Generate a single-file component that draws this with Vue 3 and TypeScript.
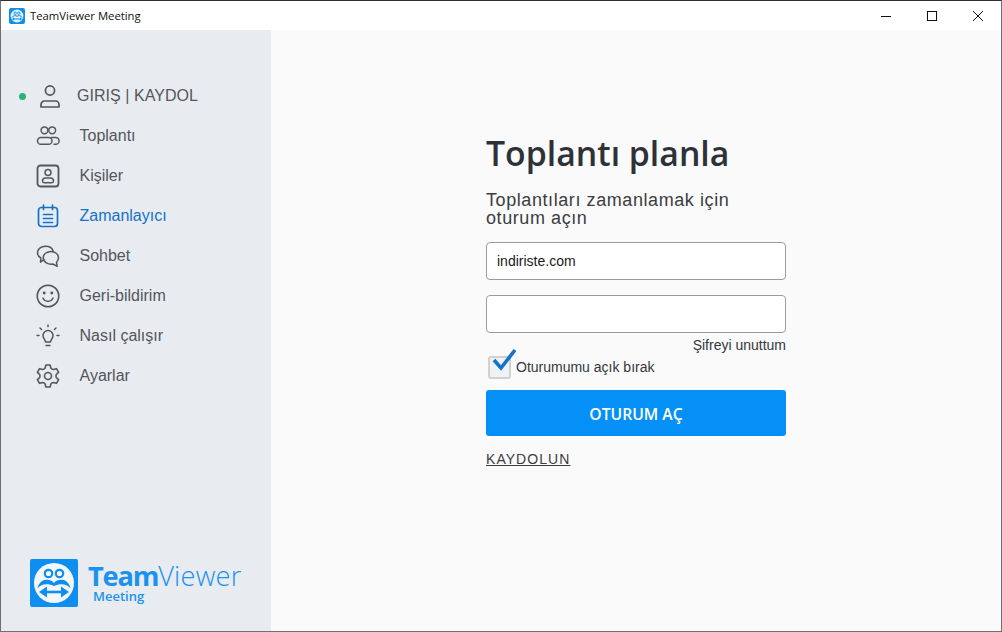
<script setup lang="ts">
interface Item { id: string; label: string; active?: boolean }
const items: Item[] = [
  { id: 'meet', label: 'Toplantı' },
  { id: 'contact', label: 'Kişiler' },
  { id: 'cal', label: 'Zamanlayıcı', active: true },
  { id: 'chat', label: 'Sohbet' },
  { id: 'smile', label: 'Geri-bildirim' },
  { id: 'bulb', label: 'Nasıl çalışır' },
  { id: 'gear', label: 'Ayarlar' },
]

function gearPath(): string {
  const pt = (r: number, deg: number): string => {
    const a = (deg * Math.PI) / 180
    return `${(12 + r * Math.sin(a)).toFixed(2)} ${(12 - r * Math.cos(a)).toFixed(2)}`
  }
  let d = ''
  for (let i = 0; i < 6; i++) {
    const c = i * 60
    d += `${i === 0 ? 'M' : 'L'}${pt(8.4, c - 20)} L${pt(11.2, c - 11)} L${pt(11.2, c + 11)} L${pt(8.4, c + 20)} `
    d += `Q${pt(7.6, c + 30)} ${pt(8.4, c + 40)} `
  }
  return d + 'Z'
}
const gear = gearPath()
</script>

<template>
  <div class="window">
    <header class="titlebar">
      <div class="app">
        <svg class="appicon" viewBox="0 0 16 16">
          <rect width="16" height="16" rx="2" fill="#0e8ee9" />
          <circle cx="8" cy="8" r="6.400" fill="#dff0fb" />
          <circle cx="6.200" cy="5.200" r="1.200" fill="none" stroke="#0e8ee9" stroke-width=".9" />
          <circle cx="9.800" cy="5.200" r="1.200" fill="none" stroke="#0e8ee9" stroke-width=".9" />
          <path d="M3 9.500C4 7.500 6.500 7 8 8.300 9.500 7 12 7.500 13 9.500" stroke="#0e8ee9" fill="none" />
          <path d="M4 11h8" stroke="#0e8ee9" />
          <path d="M3 11l2-1.500v3zM13 11l-2-1.500v3z" fill="#0e8ee9" />
        </svg>
        <span class="apptitle">TeamViewer Meeting</span>
      </div>
      <div class="winbtns">
        <span class="wb"><svg width="12" height="12" viewBox="0 0 12 12"><path d="M1 6.500h10" stroke="#111" /></svg></span>
        <span class="wb"><svg width="12" height="12" viewBox="0 0 12 12"><rect x="1.500" y="1.500" width="9" height="9" fill="none" stroke="#111" /></svg></span>
        <span class="wb"><svg width="12" height="12" viewBox="0 0 12 12"><path d="M1 1l10 10M11 1L1 11" stroke="#111" /></svg></span>
      </div>
    </header>

    <div class="body">
      <aside class="sidebar">
        <nav class="menu">
          <div class="login">
            <span class="dot"></span>
            <svg class="ico" viewBox="0 0 24 24" fill="none" stroke="#54565a" stroke-width="1.700">
              <circle cx="12" cy="6.500" r="4.600" />
              <path d="M3 23v-2.500A3.500 3.500 0 0 1 6.500 17h11a3.500 3.500 0 0 1 3.500 3.500V23z" stroke-linejoin="round" />
            </svg>
            <span class="login-label">GIRIŞ | KAYDOL</span>
          </div>
          <a v-for="it in items" :key="it.id" class="item" :class="{ active: it.active }">
            <svg class="ico" viewBox="0 0 24 24" fill="none" stroke="currentColor" stroke-width="1.500" stroke-linecap="round" stroke-linejoin="round">
              <template v-if="it.id === 'meet'">
                <circle cx="8.500" cy="6.300" r="3.400" />
                <circle cx="16.200" cy="6.300" r="3.400" />
                <rect x="1.500" y="13.500" width="14.500" height="6.800" rx="3.400" />
                <path d="M15.500 13.500h4.200a3.400 3.400 0 0 1 0 6.800H18" />
              </template>
              <template v-else-if="it.id === 'contact'">
                <rect x="1.500" y="1.500" width="21" height="21" rx="3" stroke-width="1.800" />
                <circle cx="12" cy="8.500" r="3" />
                <path d="M6.500 17c0-2 1-3 3-3h5c2 0 3 1 3 3 0 1-.7 1.700-1.700 1.700H8.200c-1 0-1.700-.7-1.700-1.700z" />
              </template>
              <template v-else-if="it.id === 'cal'">
                <rect x="2.500" y="3.500" width="19" height="19" rx="3" stroke-width="1.700" />
                <path d="M7.500 1v4.500M16.500 1v4.500M7.500 10.500h9M7.500 14.500h9M7.500 18.500h9" stroke-width="1.700" />
              </template>
              <template v-else-if="it.id === 'chat'">
                <path d="M8 15.500l-3.500 2.700.3-4.200C2.800 12.700 1.500 10.800 1.500 8.700 1.500 5 5 2.200 9.500 2.200c3.800 0 6.800 1.800 7.700 4.800" />
                <path d="M15 7.500c4 0 7.500 2.500 7.500 6.300 0 1.800-.8 3.300-2 4.500l.7 4-4.300-2.300c-4.500.8-9.700-1.800-9.700-6.200 0-3.800 3.800-6.300 7.800-6.300z" />
              </template>
              <template v-else-if="it.id === 'smile'">
                <circle cx="12" cy="12" r="10.800" />
                <path d="M7 14c1 2.300 3 3.300 5 3.300s4-1 5-3.300" />
                <circle cx="8.200" cy="9" r=".7" fill="currentColor" />
                <circle cx="15.800" cy="9" r=".7" fill="currentColor" />
              </template>
              <template v-else-if="it.id === 'bulb'">
                <path d="M9.500 18c0-2.500-2.500-3.500-2.500-6.500a5 5 0 0 1 10 0c0 3-2.500 4-2.500 6.500z" />
                <path d="M10 21.500h4M1 11.500h2M21 11.500h2M4 4l1.500 1.500M20 4l-1.500 1.500M12 1v1.500" />
              </template>
              <template v-else>
                <circle cx="12" cy="12" r="3.500" stroke-width="1.600" />
                <path :d="gear" stroke-width="1.600" />
              </template>
            </svg>
            <span class="label">{{ it.label }}</span>
          </a>
        </nav>

        <div class="brand">
          <svg class="logo" viewBox="0 0 48 48">
            <rect width="48" height="48" rx="2" fill="#0e8ef0" />
            <circle cx="24" cy="24" r="20" fill="#f2f7fc" />
            <circle cx="18.500" cy="14.500" r="3.700" fill="none" stroke="#0e8ef0" stroke-width="2.200" />
            <circle cx="29.500" cy="14.500" r="3.700" fill="none" stroke="#0e8ef0" stroke-width="2.200" />
            <path d="M24 24c-2-3-5-3.500-8-3.300-4.500.3-7.500 4-8.500 8.800 2.500-3 5.500-4.300 8.500-4.300 3 0 6 .6 8 2 2-1.400 5-2 8-2s6 1.300 8.500 4.300c-1-4.800-4-8.500-8.500-8.800-3-.2-6 .3-8 3.300z" fill="#0e8ef0" />
            <path d="M12 33h24" stroke="#0e8ef0" stroke-width="2.600" />
            <path d="M9 33l8-5.500v11zM39 33l-8-5.500v11z" fill="#0e8ef0" />
          </svg>
          <div class="brandtext">
            <div class="tv"><b>Team</b>Viewer</div>
            <div class="mt">Meeting</div>
          </div>
        </div>
      </aside>

      <main class="main">
        <form class="form" @submit.prevent>
          <h1>Toplantı planla</h1>
          <p class="sub">Toplantıları zamanlamak için<br />oturum açın</p>
          <div class="input">indiriste.com</div>
          <div class="input second"></div>
          <div class="forgot">Şifreyi unuttum</div>
          <div class="keep">
            <span class="box">
              <svg class="check" viewBox="0 0 30 28"><path d="M4 13l7 8L25 3" fill="none" stroke="#1473c8" stroke-width="3.600" /></svg>
            </span>
            <span>Oturumumu açık bırak</span>
          </div>
          <button class="submit" type="submit">OTURUM AÇ</button>
          <a class="signup">KAYDOLUN</a>
        </form>
      </main>
    </div>
  </div>
</template>

<style>
html, body { margin: 0; background: #fff; }
</style>

<style scoped>
.window {
  box-sizing: border-box;
  width: 1002px;
  height: 632px;
  border: 1px solid #6e7073;
  border-top-color: #2f2f2f;
  display: flex;
  flex-direction: column;
  overflow: hidden;
  font-family: "Liberation Sans", Arial, sans-serif;
}
.titlebar {
  height: 29px;
  flex: none;
  background: #fff;
  display: flex;
  align-items: center;
  justify-content: space-between;
}
.app { display: flex; align-items: center; padding-left: 8px; }
.appicon { width: 16px; height: 16px; }
.apptitle { margin-left: 5px; font: 11.3px "Open Sans", sans-serif; color: #111; }
.winbtns { display: flex; }
.wb { width: 46px; height: 29px; display: flex; align-items: center; justify-content: center; }
.body { flex: 1; display: flex; min-height: 0; }
.sidebar {
  width: 270px;
  flex: none;
  background: #e8ecf1;
  display: flex;
  flex-direction: column;
  justify-content: space-between;
}
.menu { padding-top: 46px; display: flex; flex-direction: column; }
.login, .item { height: 40px; display: flex; align-items: center; }
.login { color: #54565a; font-size: 16px; }
.dot { width: 7px; height: 7px; border-radius: 50%; background: #27b774; margin-left: 18px; }
.login .ico { margin-left: 12px; }
.login-label { margin-left: 15px; letter-spacing: 0.05px; }
.item { color: #54565a; font-size: 16px; padding-left: 35px; }
.item.active { color: #1473c8; }
.ico { width: 24px; height: 24px; flex: none; }
.label { margin-left: 19.5px; }
.brand { display: flex; align-items: flex-start; padding: 0 0 24px 29px; }
.logo { width: 48px; height: 48px; }
.brandtext { margin-left: 10px; padding-top: 4px; color: #1a92ee; }
.tv { font: 300 27.2px/26px "Open Sans", sans-serif; letter-spacing: 0.25px; }
.tv b { font-weight: 700; letter-spacing: -1.2px; }
.mt { font: 600 13px/14px "Open Sans", sans-serif; margin-left: 5px; }
.main { flex: 1; background: #fafafa; padding: 101px 0 0 215px; }
.form { width: 300px; color: #33373d; }
h1 { margin: 0; font: 600 33.8px/44px "Open Sans", sans-serif; color: #2e3238; }
.sub { margin: 16px 0 0; font-size: 18px; line-height: 18px; letter-spacing: 0.58px; color: #3a3d42; }
.input {
  box-sizing: border-box;
  height: 38px;
  margin-top: 15px;
  padding-left: 10px;
  background: #fff;
  border: 1px solid #9a9a9a;
  border-radius: 4px;
  font-size: 14px;
  line-height: 36px;
  color: #1a1a1a;
}
.second { margin-top: 15px; }
.forgot { text-align: right; font-size: 14px; line-height: 16px; margin-top: 4px; }
.keep { display: flex; align-items: center; font-size: 14px; height: 24px; margin-top: 2px; }
.box {
  position: relative;
  box-sizing: border-box;
  width: 23px;
  height: 23px;
  margin: 0 5px 0 2px;
  border: 2px solid #d3d0cd;
  border-radius: 3px;
  background: #eef1f5;
}
.check { position: absolute; left: 0; top: -11px; width: 30px; height: 28px; }
.submit {
  display: block;
  box-sizing: border-box;
  width: 300px;
  height: 46px;
  margin-top: 11px;
  padding: 2px 0 0;
  border: 0;
  border-radius: 3px;
  background: #0590f8;
  color: #fff;
  font: 600 15.7px "Open Sans", sans-serif;
}
.signup {
  display: inline-block;
  margin-top: 15px;
  font-size: 14px;
  line-height: 16px;
  letter-spacing: 1.05px;
  text-decoration: underline;
  color: #3a3d42;
}
</style>
